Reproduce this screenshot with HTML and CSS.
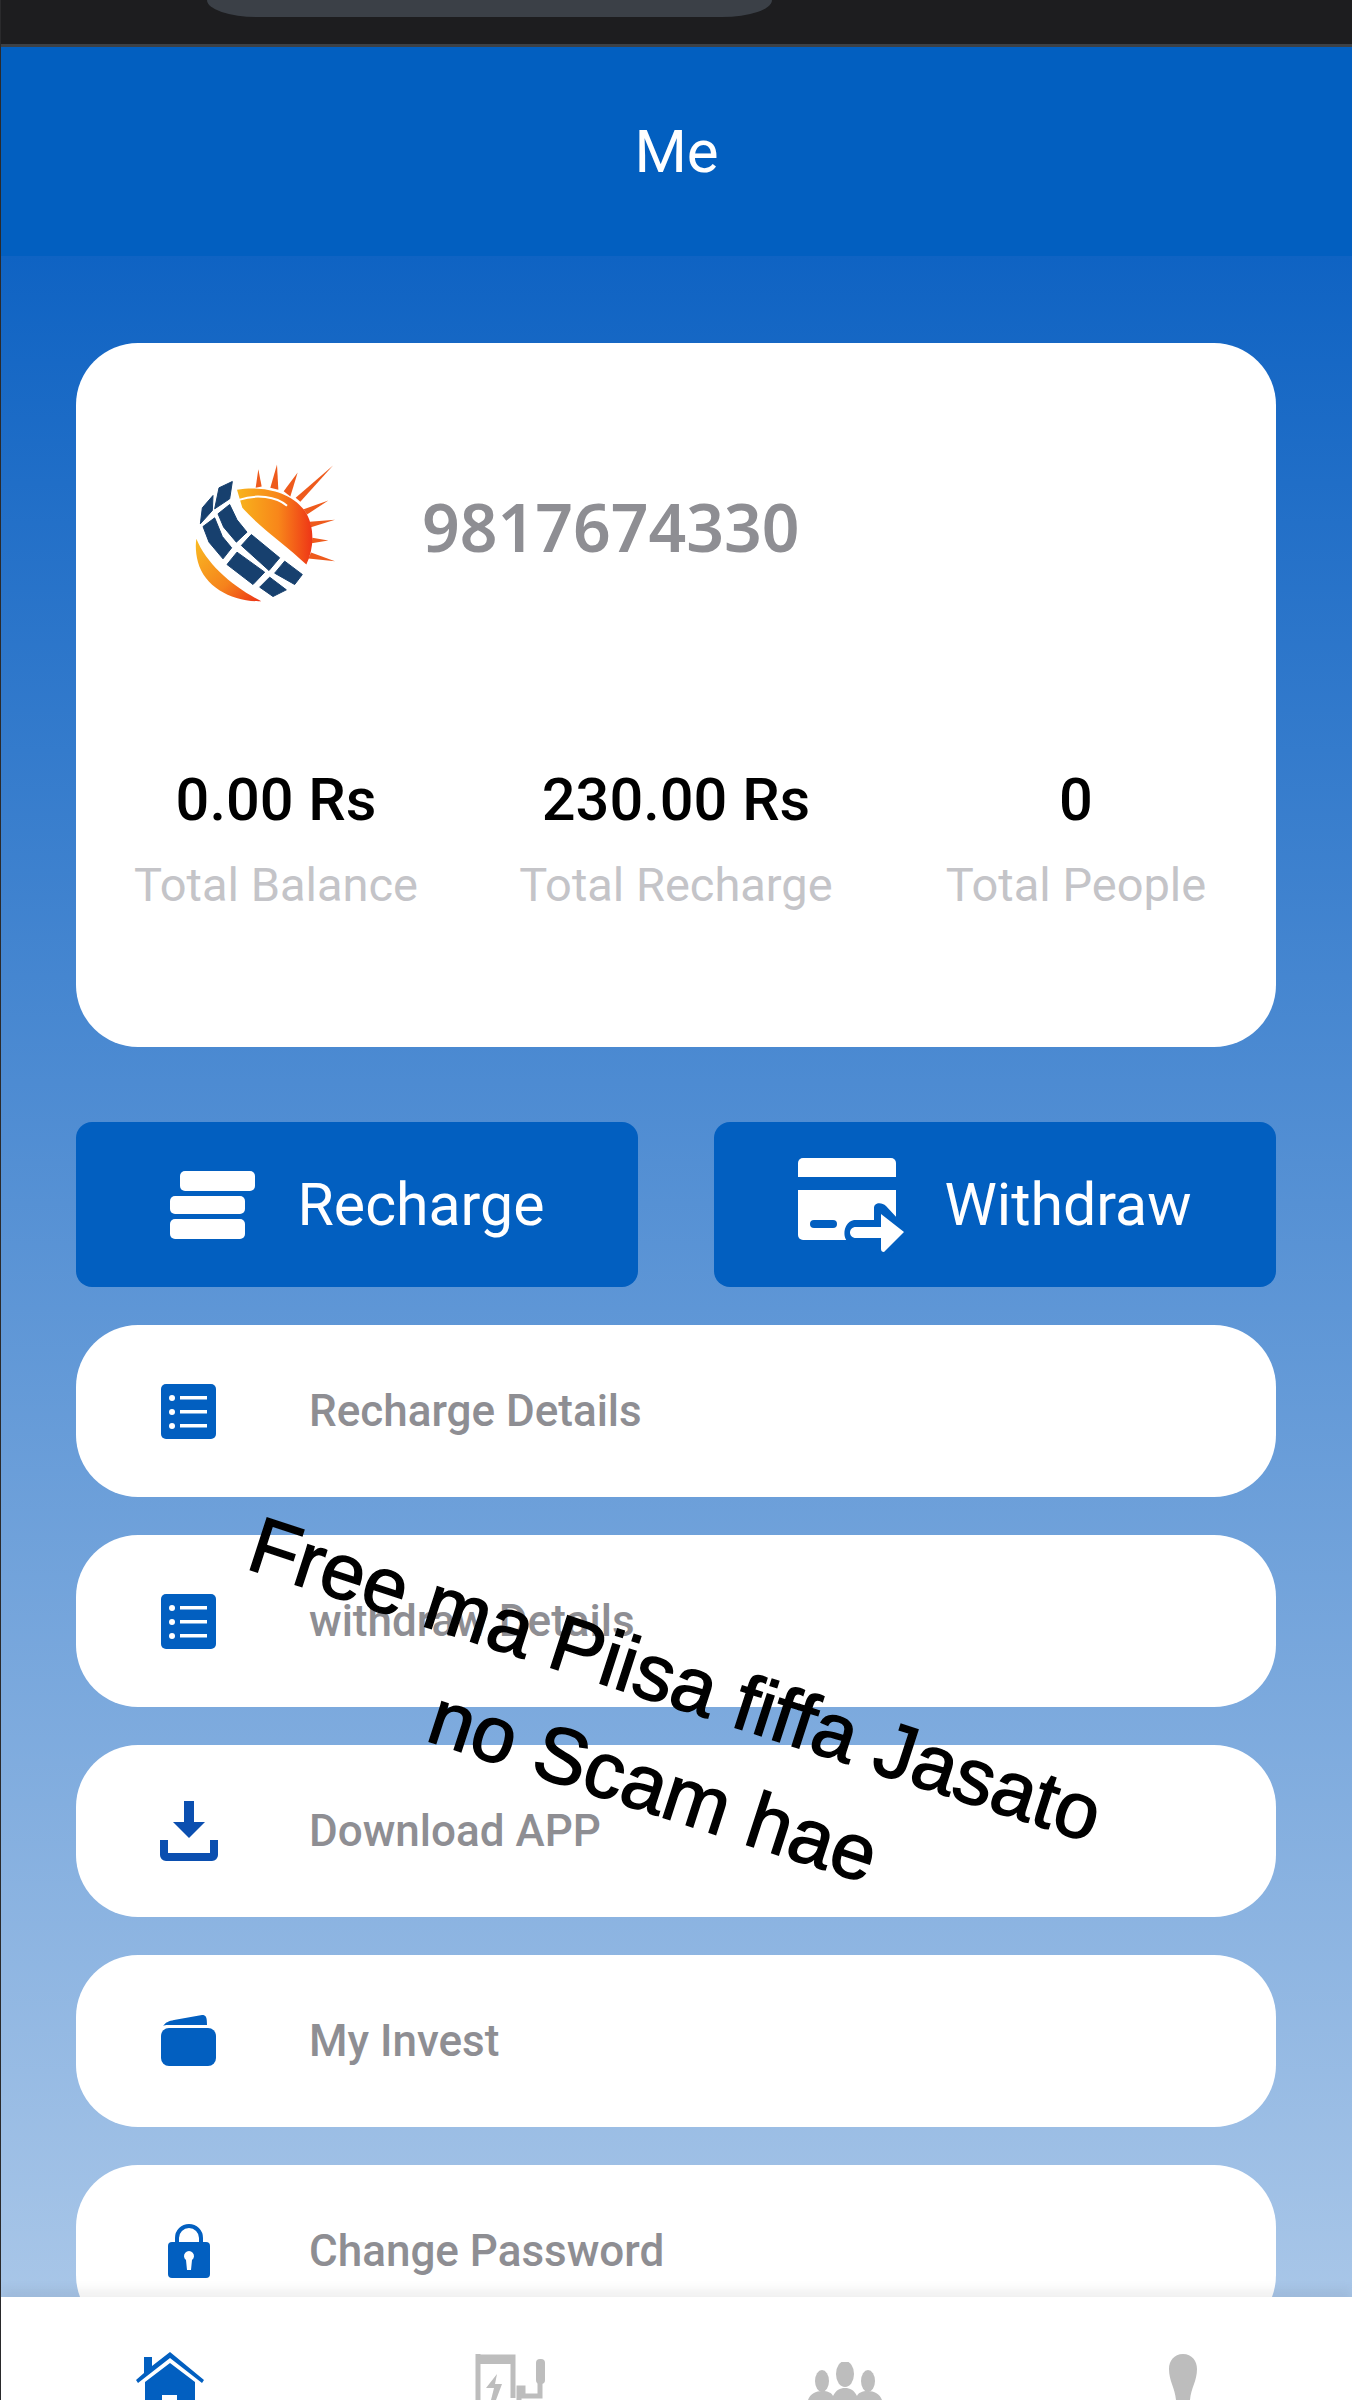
FILE: index.html
```html
<!DOCTYPE html>
<html lang="en">
<head>
    <meta charset="UTF-8">
    <meta name="viewport" content="width=device-width, initial-scale=1.0">
    <title>Me</title>
    <link rel="stylesheet" href="styles.css">
</head>
<body>

    <div class="page">
        <div class="status-bar"><div class="notch"></div></div>
        <header class="title-bar">Me</header>

        <main class="content">
            <!-- Profile card -->
            <section class="card">
                <div class="profile">
                    <svg class="logo" viewBox="130 95 435 425">
                        <defs>
                            <linearGradient id="sunGrad" x1="0" y1="0" x2="1" y2="0">
                                <stop offset="0" stop-color="#f8b41c"/>
                                <stop offset="0.55" stop-color="#f8861a"/>
                                <stop offset="1" stop-color="#ee3517"/>
                            </linearGradient>
                            <linearGradient id="lowGrad" x1="0" y1="0" x2="1" y2="1">
                                <stop offset="0" stop-color="#f9bb22"/>
                                <stop offset="0.6" stop-color="#f5821c"/>
                                <stop offset="1" stop-color="#ec3116"/>
                            </linearGradient>
                        </defs>
                        <g fill="#ee5a1c">
                            <polygon points="318,172 326,116 336,168"/>
                            <polygon points="362,172 382,102 386,178"/>
                            <polygon points="402,182 444,126 422,198"/>
                            <polygon points="438,202 550,105 452,214"/>
                            <polygon points="462,236 536,210 472,252"/>
                            <polygon points="480,274 556,268 484,290"/>
                            <polygon points="488,322 536,330 486,338"/>
                            <polygon points="484,366 556,392 476,384"/>
                        </g>
                        <path d="M262 178 C330 165 420 180 465 240 C495 285 495 350 470 402 C410 345 335 295 278 232 Z" fill="url(#sunGrad)"/>
                        <path d="M268 208 C320 190 380 198 412 226" fill="none" stroke="#fff" stroke-width="6"/>
                        <path d="M140 325 C170 400 250 470 335 512 C250 515 165 470 145 395 C138 370 137 345 140 325 Z" fill="url(#lowGrad)"/>
                        <g fill="#17406e" stroke="#17406e" stroke-width="3" stroke-linejoin="round">
                            <polygon points="248,153 208,172 195,235 240,205"/>
                            <polygon points="190,195 158,232 152,280 188,240"/>
                            <polygon points="240,222 205,250 222,290 260,335 292,305 262,268"/>
                            <polygon points="195,262 160,288 178,335 220,385 246,352 218,318"/>
                            <polygon points="305,312 275,345 358,420 390,382"/>
                            <polygon points="262,365 232,402 310,462 345,425"/>
                            <polygon points="405,392 375,428 435,462 458,432"/>
                            <polygon points="360,440 330,470 370,498 410,478"/>
                        </g>
                    </svg>
                    <span class="phone">9817674330</span>
                </div>
                <div class="stats">
                    <div class="stat">
                        <div class="stat-value">0.00 Rs</div>
                        <div class="stat-label">Total Balance</div>
                    </div>
                    <div class="stat">
                        <div class="stat-value">230.00 Rs</div>
                        <div class="stat-label">Total Recharge</div>
                    </div>
                    <div class="stat">
                        <div class="stat-value">0</div>
                        <div class="stat-label">Total People</div>
                    </div>
                </div>
            </section>

            <!-- Recharge / withdraw buttons -->
            <div class="actions">
                <div class="action action-recharge">
                    <svg class="icon-stack" viewBox="0 0 85 68" fill="#fff">
                        <rect x="10" y="0" width="75" height="20" rx="5"/>
                        <rect x="0" y="25" width="75" height="18" rx="5"/>
                        <rect x="0" y="48" width="75" height="20" rx="5"/>
                    </svg>
                    <span>Recharge</span>
                </div>
                <div class="action action-withdraw">
                    <svg class="icon-card" viewBox="0 0 107 94">
                        <path d="M5 0 H93 A5 5 0 0 1 98 5 V19 H0 V5 A5 5 0 0 1 5 0 Z" fill="#fff"/>
                        <path d="M0 32 H98 V82 H5 A5 5 0 0 1 0 77 Z" fill="#fff"/>
                        <rect x="12" y="62" width="27" height="8" rx="4" fill="#025fc0"/>
                        <path d="M52 84 C44 84 44 64 56 62 H76 V50 C76 44 84 44 88 48 L112 74 L88 100 H48 Z" fill="#025fc0"/>
                        <path d="M58 69 H83 V56 L106 74 L86 94 C84 94 83 93 83 91 V80 H58 C50 80 50 69 58 69 Z" fill="#fff"/>
                    </svg>
                    <span>Withdraw</span>
                </div>
            </div>

            <!-- Menu rows -->
            <div class="menu">
                <div class="row">
                    <svg class="row-icon" viewBox="0 0 58 58">
                        <rect x="1" y="2" width="55" height="55" rx="5" fill="#025fc0"/>
                        <g fill="#fff">
                            <circle cx="12" cy="16" r="3"/><rect x="20" y="14" width="27" height="3.5"/>
                            <circle cx="12" cy="30" r="3"/><rect x="20" y="28" width="27" height="3.5"/>
                            <circle cx="12" cy="44" r="3"/><rect x="20" y="42" width="27" height="3.5"/>
                        </g>
                    </svg>
                    <span>Recharge Details</span>
                </div>
                <div class="row">
                    <svg class="row-icon" viewBox="0 0 58 58">
                        <rect x="1" y="2" width="55" height="55" rx="5" fill="#025fc0"/>
                        <g fill="#fff">
                            <circle cx="12" cy="16" r="3"/><rect x="20" y="14" width="27" height="3.5"/>
                            <circle cx="12" cy="30" r="3"/><rect x="20" y="28" width="27" height="3.5"/>
                            <circle cx="12" cy="44" r="3"/><rect x="20" y="42" width="27" height="3.5"/>
                        </g>
                    </svg>
                    <span>withdraw Details</span>
                </div>
                <div class="row">
                    <svg class="row-icon" viewBox="0 0 58 60" fill="#0b4fb0">
                        <path d="M24 0 H34 V21 H45 L29 37 L13 21 H24 Z"/>
                        <path d="M0 39 H8 V52 H50 V39 H58 V54 A6 6 0 0 1 52 60 H6 A6 6 0 0 1 0 54 Z"/>
                    </svg>
                    <span>Download APP</span>
                </div>
                <div class="row">
                    <svg class="row-icon" viewBox="0 0 58 52" fill="#025fc0">
                        <path d="M3 11 C6 7 9 6 14 5 L42 0 C46 0 47 2 47 10 H8 C6 10 4 10 3 11 Z"/>
                        <rect x="1" y="13" width="55" height="38" rx="8"/>
                    </svg>
                    <span>My Invest</span>
                </div>
                <div class="row">
                    <svg class="row-icon" viewBox="0 0 58 56">
                        <path d="M17 20 V15 A12 12 0 0 1 41 15 V20" fill="none" stroke="#025fc0" stroke-width="4"/>
                        <rect x="8" y="19" width="42" height="36" rx="4" fill="#025fc0"/>
                        <path d="M26 37 A5 5 0 1 1 32 37 L31 47 H27 Z" fill="#fff"/>
                    </svg>
                    <span>Change Password</span>
                </div>
            </div>
        </main>

        <!-- Bottom navigation, cut off by the window -->
        <nav class="tabs">
            <div class="tab">
                <svg class="tab-home" viewBox="0 0 68 48">
                    <path d="M34 0 L68 28 L66 31 L34 6 L2 31 L0 28 L8 21 V5 H16 V14 Z" fill="#025fc0"/>
                    <path d="M34 11 L59 30 V48 H41 V43 H26 V48 H9 V30 Z" fill="#025fc0"/>
                </svg>
            </div>
            <div class="tab">
                <svg class="tab-charge" viewBox="0 0 72 46">
                    <path d="M5 3 H38 V44" fill="none" stroke="#bdbdbd" stroke-width="5"/>
                    <path d="M3 0 V46" fill="none" stroke="#bdbdbd" stroke-width="5"/>
                    <rect x="5" y="3" width="33" height="7" fill="#bdbdbd"/>
                    <path d="M22 20 L11 34 H19 L16 46 H21 L27 30 H20 Z" fill="#bdbdbd"/>
                    <rect x="61" y="5" width="9" height="25" rx="4" fill="#bdbdbd"/>
                    <path d="M65 28 V42 H48 V34 H44 V46" fill="none" stroke="#bdbdbd" stroke-width="5"/>
                </svg>
            </div>
            <div class="tab">
                <svg class="tab-people" viewBox="0 0 74 38" fill="#bdbdbd">
                    <ellipse cx="37" cy="12" rx="9" ry="13"/>
                    <ellipse cx="14" cy="19" rx="7" ry="11"/>
                    <ellipse cx="60" cy="19" rx="7" ry="11"/>
                    <path d="M0 38 C2 32 8 29 14 29 C20 29 24 31 25 34 C28 28 32 26 37 26 C42 26 46 28 49 34 C50 31 54 29 60 29 C66 29 72 32 74 38 Z"/>
                </svg>
            </div>
            <div class="tab">
                <svg class="tab-person" viewBox="0 0 30 46" fill="#bdbdbd">
                    <path d="M15 0 C24 0 29 7 29 15 C29 27 23 34 22 46 H8 C7 34 1 27 1 15 C1 7 6 0 15 0 Z"/>
                </svg>
            </div>
        </nav>

        <!-- Caption laid over the video -->
        <div class="caption">
            <div>Free ma Piisa fiffa Jasato</div>
            <div class="caption-second">no Scam hae</div>
        </div>
    </div>

</body>
</html>
```
FILE: styles.css
```css
body {
    margin: 0;
    padding: 0;
    font-family: Roboto, "Liberation Sans", sans-serif;
}
.page {
    position: relative;
    box-sizing: border-box;
    width: 1352px;
    height: 2400px;
    display: flex;
    flex-direction: column;
    overflow: hidden;
    border-left: 1px solid #2a2a2c;
}
.status-bar {
    flex: none;
    height: 47px;
    background: #1d1d1f;
    border-bottom: 3px solid #3d4146;
    box-sizing: border-box;
}
.notch {
    width: 565px;
    height: 17px;
    margin-left: 206px;
    background: #3b4047;
    border-radius: 0 0 50px 50px / 0 0 17px 17px;
}
.title-bar {
    flex: none;
    height: 209px;
    background: #025fc0;
    color: #fff;
    font-size: 60px;
    line-height: 209px;
    text-align: center;
}
.content {
    flex: 1;
    min-height: 0;
    overflow: hidden;
    box-sizing: border-box;
    padding: 87px 76px 0 75px;
    background: linear-gradient(#0f63c3, #a8c6e8);
}
.card {
    box-sizing: border-box;
    height: 704px;
    padding-top: 119px;
    background: #fff;
    border-radius: 62px;
}
.profile {
    display: flex;
    align-items: center;
    gap: 84px;
    padding-left: 117px;
}
.logo {
    width: 145px;
    height: 142px;
}
.phone {
    margin-bottom: 14px;
    color: #8e8e93;
    font-family: "Noto Sans", sans-serif;
    font-size: 66px;
    font-weight: 600;
}
.stats {
    display: grid;
    grid-template-columns: repeat(3, 1fr);
    margin-top: 163px;
    text-align: center;
}
.stat-value {
    color: #000;
    font-size: 59.5px;
    font-weight: 500;
    line-height: 66px;
}
.stat-label {
    margin-top: 22px;
    color: #c4c4c8;
    font-size: 47px;
    line-height: 60px;
}
.actions {
    display: flex;
    gap: 76px;
    margin-top: 75px;
}
.action {
    flex: 1;
    height: 165px;
    display: flex;
    align-items: center;
    justify-content: center;
    background: #025fc0;
    border-radius: 16px;
    color: #fff;
    font-size: 59px;
}
.action-recharge {
    gap: 43px;
}
.action-withdraw {
    gap: 39px;
}
.icon-stack {
    width: 85px;
    height: 68px;
}
.icon-card {
    width: 107px;
    height: 94px;
}
.menu {
    display: flex;
    flex-direction: column;
    gap: 38px;
    margin-top: 38px;
}
.row {
    flex: none;
    height: 172px;
    display: flex;
    align-items: center;
    gap: 91px;
    padding-left: 84px;
    background: #fff;
    border-radius: 62px;
    color: #8e8e93;
    font-size: 44px;
    font-weight: 500;
}
.row-icon {
    flex: none;
    width: 58px;
}
.tabs {
    flex: none;
    position: relative;
    height: 103px;
    display: grid;
    grid-template-columns: repeat(4, 1fr);
    overflow: hidden;
    background: #fff;
    box-shadow: 0 -8px 10px rgba(0, 0, 0, 0.06);
}
.tab {
    display: flex;
    justify-content: center;
    align-items: flex-start;
}
.tab-home {
    width: 68px;
    height: 48px;
    margin-top: 55px;
}
.tab-charge {
    width: 72px;
    height: 46px;
    margin-top: 57px;
    margin-left: 6px;
}
.tab-people {
    width: 74px;
    height: 38px;
    margin-top: 65px;
}
.tab-person {
    width: 30px;
    height: 46px;
    margin-top: 57px;
}
.caption {
    position: absolute;
    left: 208px;
    top: 1623px;
    width: 900px;
    color: #000;
    font-family: "Liberation Sans", Arial, sans-serif;
    font-size: 79px;
    line-height: 108px;
    text-align: center;
    -webkit-text-stroke: 1.5px #000;
    transform: rotate(18deg);
}
.caption-second {
    padding-left: 24px;
}
```
